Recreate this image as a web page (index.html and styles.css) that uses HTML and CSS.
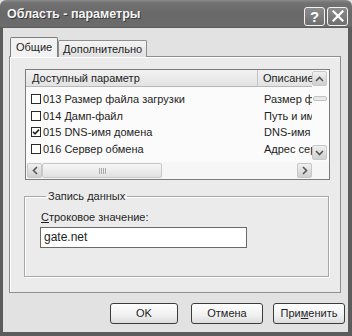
FILE: index.html
```html
<!DOCTYPE html>
<html>
<head>
<meta charset="utf-8">
<link rel="stylesheet" href="styles.css">
</head>
<body>
<div class="window">
  <div class="titlebar">
    <span class="title">Область - параметры</span>
    <div class="tb-buttons">
      <div class="tb-btn">?</div>
      <div class="tb-btn close">
        <svg width="12" height="12" viewBox="0 0 12 12"><path d="M1.5 1.5 L10.5 10.5 M10.5 1.5 L1.5 10.5" stroke="#fff" stroke-width="2.2" stroke-linecap="square"/></svg>
      </div>
    </div>
  </div>
  <div class="frame">
    <div class="tabs">
      <div class="tab active">Общие</div>
      <div class="tab">Дополнительно</div>
    </div>
    <div class="panel">
      <div class="listview">
        <div class="lv-body">
          <div class="lv-header">
            <div class="hcell c1">Доступный параметр</div>
            <div class="hcell c2">Описание</div>
          </div>
          <div class="lv-row">
            <div class="cell c1"><span class="cb"></span>013 Размер файла загрузки</div>
            <div class="cell c2">Размер файла загрузки</div>
          </div>
          <div class="lv-row">
            <div class="cell c1"><span class="cb"></span>014 Дамп-файл</div>
            <div class="cell c2">Путь и имя файла</div>
          </div>
          <div class="lv-row">
            <div class="cell c1"><span class="cb checked"><svg width="8" height="8" viewBox="0 0 8 8"><path d="M1 3.8 L3 5.8 L7 1.6" stroke="#222" stroke-width="1.6" fill="none"/></svg></span>015 DNS-имя домена</div>
            <div class="cell c2">DNS-имя домена</div>
          </div>
          <div class="lv-row">
            <div class="cell c1"><span class="cb"></span>016 Сервер обмена</div>
            <div class="cell c2">Адрес сервера</div>
          </div>
        </div>
        <div class="vscroll">
          <div class="sbtn"><svg width="9" height="6" viewBox="0 0 9 6"><path d="M1 5 L4.5 1.5 L8 5" stroke="#555" stroke-width="1.6" fill="none"/></svg></div>
          <div class="vtrack"><div class="vthumb"></div></div>
          <div class="sbtn"><svg width="9" height="6" viewBox="0 0 9 6"><path d="M1 1 L4.5 4.5 L8 1" stroke="#555" stroke-width="1.6" fill="none"/></svg></div>
        </div>
        <div class="hscroll">
          <div class="sbtn h"><svg width="6" height="9" viewBox="0 0 6 9"><path d="M5 1 L1.5 4.5 L5 8" stroke="#555" stroke-width="1.6" fill="none"/></svg></div>
          <div class="hthumb"><span class="grip"></span></div>
          <div class="htrack"></div>
          <div class="sbtn h"><svg width="6" height="9" viewBox="0 0 6 9"><path d="M1 1 L4.5 4.5 L1 8" stroke="#555" stroke-width="1.6" fill="none"/></svg></div>
        </div>
        <div class="corner"></div>
      </div>
      <fieldset class="group">
        <legend>Запись данных</legend>
        <div class="field-label"><u>С</u>троковое значение:</div>
        <div class="input">gate.net</div>
      </fieldset>
    </div>
    <div class="buttons">
      <div class="btn ok">OK</div>
      <div class="btn">Отмена</div>
      <div class="btn">При<u>м</u>енить</div>
    </div>
  </div>
</div>
</body>
</html>
```
FILE: styles.css
```css
* { box-sizing: border-box; }
body {
  margin: 0;
  font-family: "Liberation Sans", Arial, sans-serif;
  font-size: 11px;
  color: #1e1e1e;
  background: #e2e2e2;
}
.window {
  width: 352px;
  height: 336px;
  display: flex;
  flex-direction: column;
  background: #e2e2e2;
}
.titlebar {
  height: 28px;
  flex: none;
  display: flex;
  align-items: center;
  padding: 0 4px 0 7px;
  background: linear-gradient(#8a8a8a 0px, #727272 3px, #686868 14px, #6c6c6c 26px, #5a5a5a 28px);
  border-radius: 6px 6px 0 0;
}
.title {
  color: #f4f4f4;
  font-weight: bold;
  font-size: 12.5px;
  text-shadow: 1px 1px 0 #3a3a3a;
}
.tb-buttons {
  margin-left: auto;
  display: flex;
  gap: 2px;
  margin-top: 4px;
}
.tb-btn {
  width: 21px;
  height: 19px;
  border: 1px solid #f2f2f2;
  border-radius: 3px;
  background: linear-gradient(#8c8c8c, #6e6e6e);
  color: #fff;
  font-weight: bold;
  font-size: 15px;
  line-height: 17px;
  text-align: center;
  display: flex;
  align-items: center;
  justify-content: center;
}
.frame {
  flex: 1;
  display: flex;
  flex-direction: column;
  border-left: 3px solid #5c5c5c;
  border-right: 4px solid #5c5c5c;
  border-bottom: 4px solid #5c5c5c;
  padding: 9px 5px 8px 6px;
}
.tabs {
  display: flex;
  align-items: flex-end;
  padding-left: 1px;
  height: 20px;
  margin-bottom: -1px;
  position: relative;
  z-index: 1;
}
.tab {
  height: 17px;
  padding: 0 4px;
  line-height: 16px;
  border: 1px solid #8e8e8e;
  border-bottom: none;
  border-radius: 2px 2px 0 0;
  background: linear-gradient(#f4f4f4, #e0e0e0);
  font-size: 11px;
}
.tab.active {
  height: 20px;
  width: 48px;
  padding: 0 0 0 5px;
  line-height: 18px;
  background: #f2f2f2;
  border-color: #7e7e7e;
}
.panel {
  flex: 1;
  margin-right: 2px;
  border: 1px solid #8e8e8e;
  background: #ebebeb;
  box-shadow: inset 1px 1px 0 #fff;
  padding: 12px 11px 0 15px;
  display: flex;
  flex-direction: column;
}
.listview {
  width: 305px;
  height: 111px;
  border: 1px solid #7c7c7c;
  background: #fbfbfb;
  display: grid;
  grid-template-columns: 1fr 17px;
  grid-template-rows: 1fr 17px;
  overflow: hidden;
}
.lv-body {
  overflow: hidden;
  white-space: nowrap;
}
.lv-header {
  display: flex;
  height: 17px;
  border-bottom: 1px solid #b8b8b8;
  background: linear-gradient(#f2f2f2, #e2e2e2);
}
.hcell {
  line-height: 16px;
  padding-left: 6px;
  overflow: hidden;
}
.hcell.c1 {
  width: 232px;
  flex: none;
  border-right: 1px solid #c4c4c4;
}
.hcell.c2 { padding-left: 5px; }
.lv-row {
  display: flex;
  height: 16.6px;
  align-items: center;
}
.lv-header + .lv-row { margin-top: 4px; }
.cell { overflow: hidden; }
.cell.c1 {
  width: 232px;
  flex: none;
  display: flex;
  align-items: center;
  padding-left: 5px;
}
.cell.c2 { padding-left: 6px; }
.cb {
  width: 10px;
  height: 10px;
  border: 1px solid #2a2a2a;
  background: #fff;
  margin-right: 2px;
  flex: none;
  display: flex;
  align-items: center;
  justify-content: center;
}
.vscroll {
  display: flex;
  flex-direction: column;
  padding: 1px 1px 2px 0;
}
.sbtn {
  width: 15px;
  height: 15px;
  flex: none;
  border: 1px solid #c8c8c8;
  border-radius: 2px;
  background: linear-gradient(#f0f0f0, #cfcfcf);
  display: flex;
  align-items: center;
  justify-content: center;
}
.vtrack {
  flex: 1;
  padding-top: 10px;
}
.vthumb {
  height: 5px;
  margin: 0 1px;
  border: 1px solid #c4c4c4;
  border-radius: 2px;
  background: #e8e8e8;
}
.hscroll {
  display: flex;
  align-items: center;
  padding-left: 1px;
  background: #f6f6f6;
}
.hthumb {
  width: 120px;
  height: 15px;
  border: 1px solid #c8c8c8;
  border-radius: 2px;
  background: linear-gradient(#f6f6f6, #e2e2e2);
  display: flex;
  align-items: center;
  justify-content: center;
}
.grip {
  width: 7px;
  height: 6px;
  background: repeating-linear-gradient(90deg, #aaa 0 1px, transparent 1px 2px);
}
.htrack { flex: 1; }
.corner { background: #f6f6f6; }
.group {
  margin: 10px 0 0 -1px;
  width: 305px;
  height: 87px;
  border: 1px solid #a8a8a8;
  box-shadow: 1px 1px 0 #fff, inset 1px 1px 0 #fff;
  padding: 8px 10px 0 15px;
  min-width: 0;
}
.group legend {
  padding: 0 2px;
  margin-left: 6px;
  font-size: 11px;
}
.field-label {
  line-height: 14px;
  margin-left: 1px;
}
.input {
  margin-top: 3px;
  width: 207px;
  height: 21px;
  border: 1px solid #6a6a6a;
  background: #fff;
  padding-left: 3px;
  line-height: 19px;
  font-size: 12px;
}
.buttons {
  display: flex;
  justify-content: flex-end;
  gap: 10px;
  margin-top: 10px;
  margin-right: -2px;
}
.btn {
  width: 72px;
  height: 21px;
  border: 1px solid #3c3c3c;
  border-radius: 3px;
  background: linear-gradient(#ffffff, #f0f0f0 60%, #dcdcdc);
  text-align: center;
  line-height: 19px;
  font-size: 11px;
}
.btn.ok { width: 68px; margin-right: 3px; }
```
